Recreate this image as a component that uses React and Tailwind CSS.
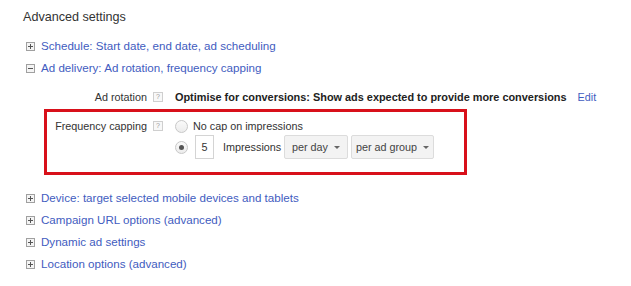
import React from "react";

const links1 = [
  { open: false, label: "Schedule: Start date, end date, ad scheduling" },
  { open: true, label: "Ad delivery: Ad rotation, frequency capping" },
];

const links2 = [
  "Device: target selected mobile devices and tablets",
  "Campaign URL options (advanced)",
  "Dynamic ad settings",
  "Location options (advanced)",
];

function Toggle({ open }) {
  return (
    <span className="w-[9px] h-[9px] border border-[#a0a0a0] bg-[#f4f4f4] flex items-center justify-center shrink-0">
      <svg width="7" height="7" viewBox="0 0 7 7">
        <rect x="1" y="3" width="5" height="1" fill="#555" />
        {!open && <rect x="3" y="1" width="1" height="5" fill="#555" />}
      </svg>
    </span>
  );
}

function LinkRow({ open, label }) {
  return (
    <li className="h-[22px] flex items-center gap-[6px]">
      <Toggle open={open} />
      <a className="text-[11.6px] text-[#3f5cc0] cursor-pointer whitespace-nowrap">{label}</a>
    </li>
  );
}

function Help() {
  return (
    <span className="w-[10px] h-[10px] border border-[#cfcfcf] bg-[#f8f8f8] text-[7px] leading-[8px] text-[#999] flex items-center justify-center ml-[6px] shrink-0">
      ?
    </span>
  );
}

function Radio({ checked }) {
  return (
    <span className="w-[13px] h-[13px] rounded-full border border-[#c8c8c8] bg-gradient-to-b from-[#fafafa] to-[#ececec] flex items-center justify-center shrink-0">
      {checked && <span className="w-[5px] h-[5px] rounded-full bg-[#555]" />}
    </span>
  );
}

function Dropdown({ label, w }) {
  return (
    <button className={`h-[24px] ${w} ml-[3px] rounded-[2px] border border-[#dcdcdc] bg-[#f3f3f3] text-[10.8px] text-[#444] flex items-center justify-center gap-[6px] whitespace-nowrap`}>
      <span>{label}</span>
      <svg width="6" height="3" viewBox="0 0 6 3">
        <path d="M0 0 L6 0 L3 3 Z" fill="#666" />
      </svg>
    </button>
  );
}

export default function App() {
  return (
    <div className="w-[631px] h-[286px] bg-white pl-[23px] pt-[9px] font-['Liberation_Sans',Arial,sans-serif] text-[#222]">
      <h2 className="text-[12.6px] leading-[16px] text-[#333]">Advanced settings</h2>

      <ul className="mt-[10px] ml-[3px]">
        {links1.map((l) => (
          <LinkRow key={l.label} {...l} />
        ))}
      </ul>

      {/* Ad rotation */}
      <div className="mt-[7px] h-[22px] flex items-center ml-[24px] whitespace-nowrap">
        <span className="w-[100px] text-right text-[10.8px] text-[#333]">Ad rotation</span>
        <Help />
        <span className="ml-[12px] text-[10.9px] font-bold text-[#222]">
          Optimise for conversions: Show ads expected to provide more conversions
        </span>
        <a className="ml-[11px] text-[10.8px] text-[#3f5cc0]">Edit</a>
      </div>

      {/* Frequency capping (highlighted) */}
      <div className="mt-[1px] ml-[21px] w-[423px] h-[66px] border-[3px] border-[#d8101a] pt-[5px] flex items-start whitespace-nowrap">
        <div className="h-[18px] flex items-center">
          <span className="w-[100px] text-right text-[10.8px] text-[#333]">Frequency capping</span>
          <Help />
        </div>
        <div className="ml-[12px] flex flex-col">
          <div className="h-[18px] flex items-center gap-[5px]">
            <Radio />
            <span className="text-[10.8px] text-[#333]">No cap on impressions</span>
          </div>
          <div className="h-[24px] flex items-center">
            <Radio checked />
            <span className="ml-[7px] w-[19px] h-[24px] border border-[#d4d4d4] text-[10.8px] text-[#333] flex items-center justify-center">
              5
            </span>
            <span className="ml-[9px] w-[58px] text-[10.8px] text-[#333]">Impressions</span>
            <Dropdown label="per day" w="w-[64px]" />
            <Dropdown label="per ad group" w="w-[83px]" />
          </div>
        </div>
      </div>

      <ul className="mt-[12px] ml-[3px]">
        {links2.map((l) => (
          <LinkRow key={l} label={l} />
        ))}
      </ul>
    </div>
  );
}
